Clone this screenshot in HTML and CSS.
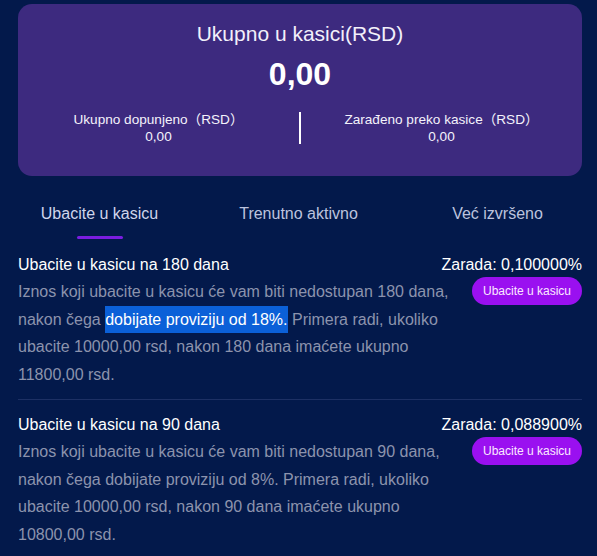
FILE: index.html
```html
<!DOCTYPE html>
<html lang="sr">
<head>
<meta charset="utf-8">
<title>Kasica</title>
<link rel="stylesheet" href="styles.css">
</head>
<body>
<div class="page">
  <section class="summary">
    <div class="summary-title">Ukupno u kasici(RSD)</div>
    <div class="summary-total">0,00</div>
    <div class="summary-stats">
      <div class="stat">
        <div class="stat-label">Ukupno dopunjeno（RSD）</div>
        <div class="stat-value">0,00</div>
      </div>
      <div class="stat-divider"></div>
      <div class="stat">
        <div class="stat-label">Zarađeno preko kasice（RSD）</div>
        <div class="stat-value">0,00</div>
      </div>
    </div>
  </section>

  <nav class="tabs">
    <div class="tab active"><span>Ubacite u kasicu</span><i class="tab-bar"></i></div>
    <div class="tab"><span>Trenutno aktivno</span></div>
    <div class="tab"><span>Već izvršeno</span></div>
  </nav>

  <div class="plans">
    <div class="plan">
      <div class="plan-head">
        <span class="plan-title">Ubacite u kasicu na 180 dana</span>
        <span class="plan-rate">Zarada: 0,100000%</span>
      </div>
      <div class="plan-body">
        <p class="plan-desc">Iznos koji ubacite u kasicu će vam biti nedostupan 180 dana, nakon čega <span class="mark">dobijate proviziju od 18%.</span> Primera radi, ukoliko ubacite 10000,00 rsd, nakon 180 dana imaćete ukupno 11800,00 rsd.</p>
        <button class="plan-btn">Ubacite u kasicu</button>
      </div>
    </div>
    <div class="plan">
      <div class="plan-head">
        <span class="plan-title">Ubacite u kasicu na 90 dana</span>
        <span class="plan-rate">Zarada: 0,088900%</span>
      </div>
      <div class="plan-body">
        <p class="plan-desc">Iznos koji ubacite u kasicu će vam biti nedostupan 90 dana, nakon čega dobijate proviziju od 8%. Primera radi, ukoliko ubacite 10000,00 rsd, nakon 90 dana imaćete ukupno 10800,00 rsd.</p>
        <button class="plan-btn">Ubacite u kasicu</button>
      </div>
    </div>
  </div>
</div>
</body>
</html>
```
FILE: styles.css
```css
* { box-sizing: border-box; }
html, body {
  margin: 0;
  padding: 0;
  background: #03194b;
  font-family: "Liberation Sans", Arial, "Noto Sans CJK SC", sans-serif;
  color: #ffffff;
}
.page {
  width: 597px;
  height: 556px;
  overflow: hidden;
  padding-top: 4px;
}
.summary {
  margin: 0 15px 0 18px;
  height: 172px;
  background: #3d2a7f;
  border-radius: 14px;
  padding-top: 18px;
  text-align: center;
}
.summary-title {
  font-size: 21px;
  line-height: 24px;
  color: #f2f0fa;
}
.summary-total {
  margin-top: 10px;
  font-size: 32px;
  font-weight: 700;
  line-height: 36px;
}
.summary-stats {
  margin-top: 19px;
  display: flex;
  align-items: center;
}
.stat {
  flex: 1;
  font-size: 13.6px;
  line-height: 17px;
  color: #f4f2fb;
}
.stat-divider {
  width: 2px;
  height: 32px;
  background: #ffffff;
}
.tabs {
  display: flex;
  margin-top: 27px;
}
.tab {
  flex: 1;
  display: flex;
  flex-direction: column;
  align-items: center;
  font-size: 16px;
  line-height: 22px;
  color: #bcc3de;
  height: 37px;
}
.tab.active { color: #cfd5ec; }
.tab-bar {
  display: block;
  margin-top: 11px;
  width: 46px;
  height: 3px;
  border-radius: 2px;
  background: #7a1de0;
}
.plans {
  margin: 0 15px 0 18px;
}
.plan {
  padding: 14px 0 10px;
  border-bottom: 1px solid #1d3064;
}
.plan + .plan { padding-top: 14px; }
.plan-head {
  display: flex;
  justify-content: space-between;
  font-size: 16px;
  line-height: 22px;
  color: #ffffff;
}
.plan-body {
  display: flex;
  align-items: flex-start;
  margin-top: 2px;
}
.plan-desc {
  flex: 1;
  margin: 0 10px 0 0;
  font-size: 16px;
  line-height: 27.7px;
  color: #8c93ad;
}
.mark {
  display: inline-block;
  background: #0b60d8;
  color: #ffffff;
}
.plan-btn {
  margin-top: -1px;
  width: 110px;
  height: 28px;
  border: 0;
  border-radius: 14px;
  background: #9a10f0;
  color: #fbe9ff;
  font-family: "Liberation Sans", Arial, sans-serif;
  font-size: 12px;
  padding: 0;
}
```
